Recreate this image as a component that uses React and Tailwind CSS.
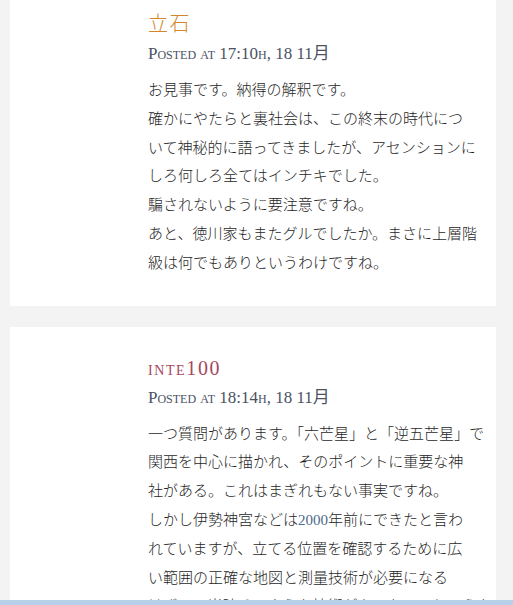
import React from "react";

const comments = [
  {
    name: "立石",
    nameColor: "text-[#d4862a]",
    posted: "Posted at 17:10h, 18 11月",
    lines: [
      "お見事です。納得の解釈です。",
      "確かにやたらと裏社会は、この終末の時代につ",
      "いて神秘的に語ってきましたが、アセンションに",
      "しろ何しろ全てはインチキでした。",
      "騙されないように要注意ですね。",
      "あと、徳川家もまたグルでしたか。まさに上層階",
      "級は何でもありというわけですね。",
    ],
    first: true,
  },
  {
    name: "inte100",
    nameColor: "text-[#a5475c]",
    posted: "Posted at 18:14h, 18 11月",
    lines: [
      "一つ質問があります。「六芒星」と「逆五芒星」で",
      "関西を中心に描かれ、そのポイントに重要な神",
      "社がある。これはまぎれもない事実ですね。",
      "しかし伊勢神宮などは2000年前にできたと言わ",
      "れていますが、立てる位置を確認するために広",
      "い範囲の正確な地図と測量技術が必要になる",
      "はずで、当時そのような技術があったのでしょうか。",
    ],
  },
];

const serif = "font-['Liberation_Serif','Noto_Sans_CJK_JP',serif]";

function Comment({ c }) {
  return (
    <div className={`bg-white pl-[138px] pr-4 ${c.first ? "pt-[10px] pb-[28px]" : "pt-[27px] pb-10"}`}>
      <div className={`${serif} ${c.nameColor} text-[20px] leading-[28px] font-light [font-variant:small-caps] tracking-[0.08em]`}>
        {c.name}
      </div>
      <div className={`${serif} mt-1 text-[17px] leading-[24px] text-[#4a5262] [font-variant:small-caps]`}>
        {c.posted}
      </div>
      <div className={`${serif} mt-[10px] text-[15px] leading-[28.8px] font-light text-[#1f1f1f]`}>
        {c.lines.map((l, i) => (
          <div key={i} className="whitespace-nowrap">
            {l.includes("2000") ? (
              <>
                {l.split("2000")[0]}
                <span className="font-normal text-[#4a6a8a]">2000</span>
                {l.split("2000")[1]}
              </>
            ) : (
              l
            )}
          </div>
        ))}
      </div>
    </div>
  );
}

export default function App() {
  return (
    <div className="h-[605px] overflow-hidden bg-[#f3f3f3]">
      <div className="ml-[10px] w-[486px] flex flex-col gap-[21px]">
        {comments.map((c, i) => (
          <Comment key={i} c={c} />
        ))}
      </div>
      <div className="fixed bottom-0 left-0 right-0 h-[5px] bg-[#b9d0ea]" />
    </div>
  );
}
